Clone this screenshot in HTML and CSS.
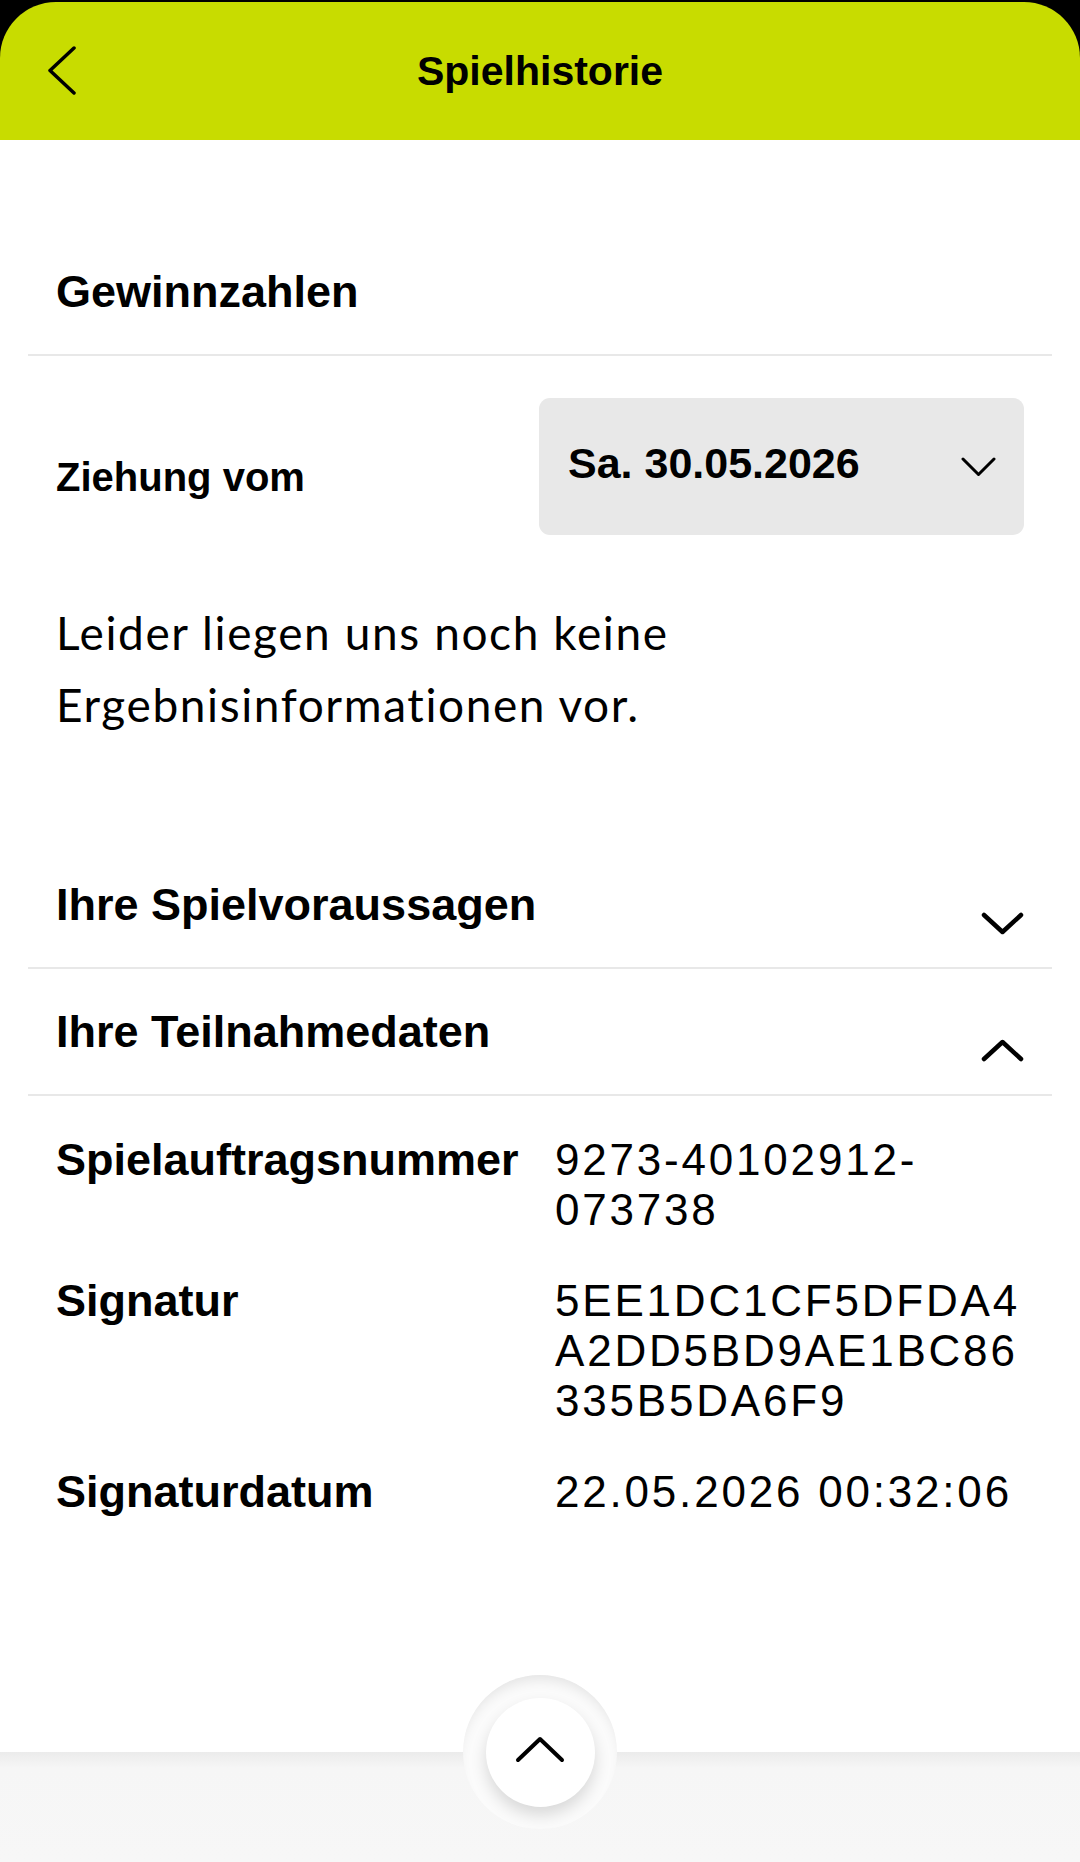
FILE: index.html
```html
<!DOCTYPE html>
<html lang="de">
<head>
<meta charset="utf-8">
<title>Spielhistorie</title>
<link rel="stylesheet" href="styles.css">
</head>
<body>
<div class="screen">
  <header class="topbar">
    <div class="topbar-inner">
      <button class="back" aria-label="Zurück">
        <svg width="28" height="49" viewBox="0 0 28 49"><polyline points="26,2 2,24.5 26,47" fill="none" stroke="#000" stroke-width="3.5" stroke-linecap="round" stroke-linejoin="round"/></svg>
      </button>
      <h1 class="title">Spielhistorie</h1>
      <span class="spacer"></span>
    </div>
  </header>

  <main class="content">
    <h2 class="section-title">Gewinnzahlen</h2>
    <div class="draw-row">
      <span class="draw-label">Ziehung vom</span>
      <div class="select">
        <span class="select-value">Sa. 30.05.2026</span>
        <svg class="select-chevron" width="35" height="20" viewBox="0 0 35 20"><polyline points="2,2 17.5,17.5 33,2" fill="none" stroke="#000" stroke-width="3" stroke-linecap="round" stroke-linejoin="round"/></svg>
      </div>
    </div>
    <p class="notice">Leider liegen uns noch keine Ergebnisinformationen vor.</p>

    <div class="acc-row first">
      <span class="acc-title">Ihre Spielvoraussagen</span>
      <svg class="acc-chevron" width="43" height="23" viewBox="0 0 43 23"><polyline points="3,3 21.5,20 40,3" fill="none" stroke="#000" stroke-width="4.5" stroke-linecap="round" stroke-linejoin="round"/></svg>
    </div>
    <div class="acc-row">
      <span class="acc-title">Ihre Teilnahmedaten</span>
      <svg class="acc-chevron" width="43" height="23" viewBox="0 0 43 23"><polyline points="3,20 21.5,3 40,20" fill="none" stroke="#000" stroke-width="4.5" stroke-linecap="round" stroke-linejoin="round"/></svg>
    </div>

    <dl class="details">
      <dt>Spielauftragsnummer</dt>
      <dd>9273-40102912-073738</dd>
      <dt>Signatur</dt>
      <dd>5EE1DC1CF5DFDA4A2DD5BD9AE1BC86335B5DA6F9</dd>
      <dt>Signaturdatum</dt>
      <dd class="nowrap">22.05.2026 00:32:06</dd>
    </dl>
  </main>

  <footer class="bottombar">
    <div class="to-top-ring">
      <button class="to-top" aria-label="Nach oben">
        <svg width="50" height="27" viewBox="0 0 50 27"><polyline points="3,24 25,3 47,24" fill="none" stroke="#000" stroke-width="4" stroke-linecap="round" stroke-linejoin="round"/></svg>
      </button>
    </div>
  </footer>
</div>
</body>
</html>
```

FILE: styles.css
```css
* {
  box-sizing: border-box;
  margin: 0;
  padding: 0;
}

html, body {
  background: #ffffff;
}

body {
  font-family: "Liberation Sans", Arial, sans-serif;
  color: #000;
}

.screen {
  width: 1080px;
  min-height: 1862px;
  display: flex;
  flex-direction: column;
}

/* Header */
.topbar {
  background: #000;
  padding-top: 2px;
}

.topbar-inner {
  height: 138px;
  background: #c8dc00;
  border-radius: 56px 56px 0 0;
  display: grid;
  grid-template-columns: 1fr auto 1fr;
  align-items: center;
  padding-top: 2px;
}

.back {
  justify-self: start;
  margin-left: 48px;
  margin-top: -4px;
  background: none;
  border: 0;
  display: flex;
}

.title {
  font-size: 41px;
  font-weight: bold;
  line-height: 1.15;
}

/* Content */
.content {
  flex: 1;
  padding: 0 28px;
}

.section-title {
  font-size: 45px;
  font-weight: bold;
  line-height: 52px;
  padding: 126px 28px 36px;
  border-bottom: 2px solid #e8e8e8;
}

.draw-row {
  display: flex;
  justify-content: space-between;
  align-items: center;
  margin-top: 42px;
  padding: 0 28px;
}

.draw-label {
  font-size: 40px;
  font-weight: bold;
  margin-top: 21px;
}

.select {
  width: 485px;
  height: 137px;
  background: #e8e8e8;
  border-radius: 11px;
  display: flex;
  align-items: center;
  justify-content: space-between;
  padding: 0 28px 6px 29px;
}

.select-value {
  font-size: 43px;
  font-weight: bold;
}

.select-chevron {
  margin-top: 6px;
}

.notice {
  font-family: Lato, "Liberation Sans", sans-serif;
  font-size: 46px;
  letter-spacing: 1.6px;
  font-variant-ligatures: none;
  line-height: 72px;
  margin-top: 62px;
  padding: 0 28px;
}

.acc-row {
  display: flex;
  justify-content: space-between;
  align-items: flex-start;
  padding: 37px 28px 32px;
  border-bottom: 2px solid #e8e8e8;
}

.acc-row.first {
  margin-top: 101px;
}

.acc-title {
  font-size: 45px;
  font-weight: bold;
  line-height: 52px;
}

.acc-chevron {
  margin-top: 33px;
}

.details {
  display: grid;
  grid-template-columns: 499px 469px;
  row-gap: 41px;
  padding: 39px 0 0 28px;
  font-size: 44px;
  line-height: 50px;
}

.details dt {
  font-size: 45px;
  font-weight: bold;
}

.details dd {
  letter-spacing: 2.8px;
  overflow-wrap: anywhere;
}

.details .nowrap {
  white-space: nowrap;
}

/* Bottom bar */
.bottombar {
  position: relative;
  height: 110px;
  background: linear-gradient(#ebebeb 0, #f6f6f6 16px, #f7f7f7 100%);
}

.to-top-ring {
  position: absolute;
  left: 50%;
  top: -77px;
  width: 154px;
  height: 154px;
  margin-left: -77px;
  border-radius: 50%;
  background: #fbfbfb;
  box-shadow: inset 0 10px 14px -6px rgba(0, 0, 0, 0.10);
  display: flex;
  align-items: center;
  justify-content: center;
}

.to-top {
  width: 109px;
  height: 109px;
  border-radius: 50%;
  border: 0;
  background: #fff;
  box-shadow: 0 8px 16px rgba(0, 0, 0, 0.14);
  display: flex;
  align-items: center;
  justify-content: center;
}

.to-top svg {
  margin-top: -6px;
}
```
